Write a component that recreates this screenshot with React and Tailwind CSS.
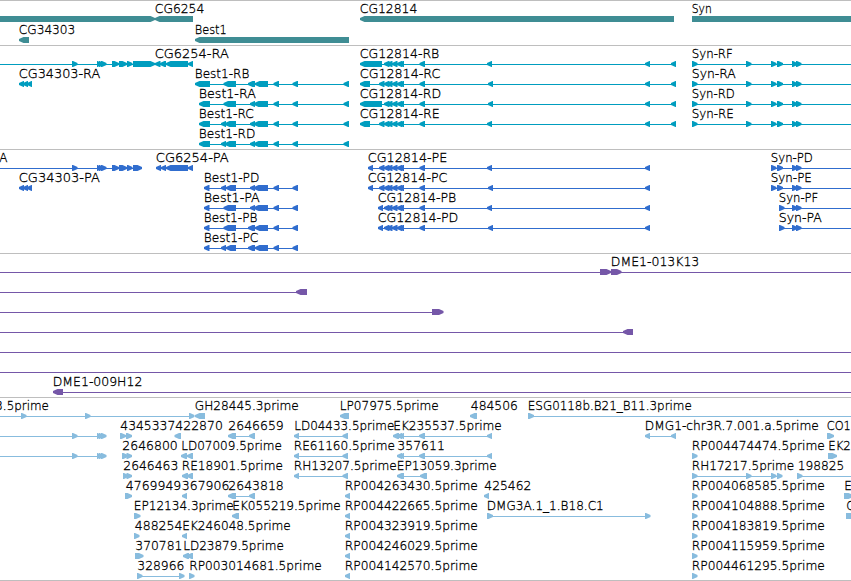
import React from "react";

// Feature: [direction, line start, line end, exons]; label: [text, ink start, ink end]
const L = "l";
const R = "r";

const bestTail = [[273.5, 279], [292.5, 298], [343.5, 349]];
const cgLong = (a, far) => [...a, [384, 389.5], [387, 392.5], [392, 397.5], [397, 402], [398.5, 404], [419.5, 425], [far, far + 5]];
const synExons = [[692, 697.5], [746, 751.5], [771, 776.5], [777, 783], [792, 797.5], [796, 801.5]];
const leftGene = [[72, 77.5], [97, 102], [99, 104], [101, 106.5], [112, 119], [119, 127], [127, 132.5]];
const tiny = [[19, 24], [23, 28], [27, 32]];

const tracks = [
  {
    id: "genes",
    box: "h-[45px] text-[#3f8d94]",
    rowBox: "h-[21px]",
    rows: [
      {
        f: [[R, 0, 0, [[-10, 155]]], [L, 0, 0, [[155, 193]]], [L, 0, 0, [[360, 674]]], [R, 0, 0, [[692, 870]]]],
        t: [["CG6254", 155, 203.5], ["CG12814", 360, 416.5], ["Syn", 692, 711]],
      },
      {
        f: [[L, 0, 0, [[19, 29]]], [L, 0, 0, [[195, 349]]]],
        t: [["CG34303", 19, 74.5], ["Best1", 195, 226]],
      },
    ],
  },
  {
    id: "transcripts",
    box: "h-[104px] text-[#009dbf]",
    rowBox: "h-5",
    rows: [
      {
        f: [
          [R, 0, 150, [...leftGene, [133, 155]]],
          [L, 155, 193, [[155, 160.5], [160, 166], [166, 188], [188, 193]]],
          [L, 360, 676, cgLong([[360, 382]], 487).concat([[645, 650], [671, 676]])],
          [R, 692, 851, synExons],
        ],
        t: [["CG6254-RA", 155, 228], ["CG12814-RB", 360, 438.5], ["Syn-RF", 692, 732]],
      },
      {
        f: [
          [L, 0, 0, tiny],
          [L, 195, 349, [[195, 210], [223.5, 236], [248, 255], [255, 268], ...bestTail]],
          [L, 360, 676, cgLong([[360, 370], [379, 384.5]], 488).concat([[645, 650], [671, 676]])],
          [R, 692, 851, synExons],
        ],
        t: [["CG34303-RA", 19, 99.5], ["Best1-RB", 195, 248.5], ["CG12814-RC", 360, 439.5], ["Syn-RA", 692, 735]],
      },
      {
        f: [
          [L, 199, 349, [[199, 210], [223.5, 236], [250, 255], [254, 268], ...bestTail]],
          [L, 360, 676, cgLong([[360, 382]], 488).concat([[645, 650], [671, 676]])],
          [R, 692, 851, synExons],
        ],
        t: [["Best1-RA", 199, 255], ["CG12814-RD", 360, 440.5], ["Syn-RD", 692, 734]],
      },
      {
        f: [
          [L, 199, 349, [[199, 210], [221, 226], [225, 236], [250, 255], [254, 268], ...bestTail]],
          [L, 360, 676, cgLong([[360, 370], [379, 384.5]], 487).concat([[645, 650], [671, 676]])],
          [R, 692, 851, synExons],
        ],
        t: [["Best1-RC", 199, 253], ["CG12814-RE", 360, 439], ["Syn-RE", 692, 733]],
      },
      {
        f: [[L, 199, 349, [[199, 210], [221, 226], [225, 236], [250, 255], [254, 268], ...bestTail]]],
        t: [["Best1-RD", 199, 254.5]],
      },
    ],
  },
  {
    id: "proteins",
    box: "h-[104px] text-[#306dce]",
    rowBox: "h-5",
    rows: [
      {
        f: [
          [R, 0, 140, [...leftGene, [133, 142]]],
          [L, 156, 193, [[156, 161], [161, 166], [166, 188], [188, 193]]],
          [L, 368, 650, cgLong([[368, 373], [379, 384.5]], 487).concat([[645, 650]])],
          [R, 771, 851, synExons.slice(2)],
        ],
        t: [["A", -0.5, 7.5], ["CG6254-PA", 156, 228], ["CG12814-PE", 368, 446.5], ["Syn-PD", 771, 812]],
      },
      {
        f: [
          [L, 0, 0, tiny],
          [L, 204, 298, [[204, 209.5], [221, 226], [226, 236], [250, 255], [254, 268], [273.5, 279], [292.5, 298]]],
          [L, 368, 650, cgLong([[368, 373], [379, 384.5]], 488).concat([[645, 650]])],
          [R, 771, 851, synExons.slice(2)],
        ],
        t: [["CG34303-PA", 19, 99], ["Best1-PD", 204, 258.5], ["CG12814-PC", 368, 446.5], ["Syn-PE", 771, 811]],
      },
      {
        f: [
          [L, 204, 298, [[204, 209.5], [223.5, 236], [250, 255], [254, 268], [273.5, 279], [292.5, 298]]],
          [L, 378, 650, cgLong([[378, 383]], 487).concat([[645, 650]])],
          [R, 779, 851, [[779, 784.5], [792, 797.5], [796, 801.5]]],
        ],
        t: [["Best1-PA", 204, 259], ["CG12814-PB", 378, 455.5], ["Syn-PF", 779, 817.5]],
      },
      {
        f: [
          [L, 204, 298, [[204, 209.5], [223.5, 236], [248, 255], [255, 268], [273.5, 279], [292.5, 298]]],
          [L, 378, 650, cgLong([[378, 383]], 488).concat([[645, 650]])],
          [R, 779, 851, [[779, 784.5], [792, 797.5], [796, 801.5]]],
        ],
        t: [["Best1-PB", 204, 256.5], ["CG12814-PD", 378, 457.5], ["Syn-PA", 779, 821]],
      },
      {
        f: [[L, 204, 298, [[204, 209.5], [221, 226], [226, 236], [248, 255], [255, 268], [273.5, 279], [292.5, 298]]]],
        t: [["Best1-PC", 204, 257.5]],
      },
    ],
  },
  {
    id: "clones",
    box: "h-[144px] text-[#7557a8]",
    rowBox: "h-5",
    rows: [
      { f: [[R, 0, 851, [[600, 611], [611, 621.5]]]], t: [["DME1-013K13", 611, 698.5]] },
      { f: [[L, 0, 307, [[296, 307]]]], t: [] },
      { f: [[R, 0, 443, [[432, 443.5]]]], t: [] },
      { f: [[L, 0, 633, [[623, 633]]]], t: [] },
      { f: [[L, 0, 851, []]], t: [] },
      { f: [[L, 0, 851, []]], t: [] },
      { f: [[L, 53, 851, [[53, 63]]]], t: [["DME1-009H12", 53, 141.5]] },
    ],
  },
  {
    id: "ests",
    box: "h-[184px] border-b text-[#88bcde]",
    rowBox: "h-5",
    rows: [
      {
        f: [
          [R, 0, 193, [[21, 26.5], [85, 90.5], [189, 194.5]]],
          [L, 0, 0, [[195, 205]]],
          [L, 0, 0, [[340, 349]]],
          [L, 0, 0, [[470, 477]]],
          [R, 528, 851, [[528, 534]]],
        ],
        t: [["3.5prime", -4.5, 48], ["GH28445.3prime", 195, 298], ["LP07975.5prime", 340, 438], ["484506", 471, 517], ["ESG0118b.B21_B11.3prime", 528, 691]],
      },
      {
        f: [
          [R, 0, 104, [[72, 77.5], [97, 102], [99, 104], [101, 106.5]]],
          [R, 0, 0, [[120, 126], [126, 132]]],
          [L, 0, 0, [[174.5, 181]]],
          [L, 228, 255, [[228, 236], [249, 255]]],
          [L, 294, 348, [[294, 299], [342.5, 348]]],
          [L, 393, 492, [[393, 399], [397, 402], [399, 404], [419, 425], [487, 492]]],
          [L, 645, 676, [[645, 650], [671, 676]]],
          [R, 0, 0, [[827, 834]]],
        ],
        t: [["4345337", 120.5, 174.5], ["422870", 175.5, 222], ["2646659", 228.5, 283], ["LD04433.5prime", 294.5, 393.5], ["EK235537.5prime", 393.5, 501], ["DMG1-chr3R.7.001.a.5prime", 645, 818], ["CO1", 827, 850]],
      },
      {
        f: [
          [R, 0, 104, [[72, 77.5], [97, 102], [99, 104], [101, 106.5]]],
          [R, 0, 0, [[122, 128], [126.5, 132]]],
          [L, 0, 0, [[181, 187], [187, 193]]],
          [L, 294, 348, [[294, 299], [342.5, 348]]],
          [L, 397, 492, [[397, 402], [399, 404], [419, 425], [487, 492]]],
          [R, 0, 0, [[692, 697.5]]],
          [R, 0, 0, [[828, 837]]],
        ],
        t: [["2646800", 122.5, 177], ["LD07009.5prime", 181.5, 281], ["RE61160.5prime", 294, 394], ["357611", 397.5, 444], ["RP004474474.5prime", 692, 824], ["EK2", 828.5, 850]],
      },
      {
        f: [
          [R, 0, 0, [[123, 128.5], [126.5, 132]]],
          [L, 0, 0, [[182, 188], [187, 193]]],
          [L, 294, 348, [[294, 299], [342.5, 348]]],
          [L, 397, 427, [[397, 404], [420, 427]]],
          [R, 692, 782, [[692, 697.5], [746, 751.5], [771, 776.5], [777, 782.5]]],
          [R, 797, 851, [[797, 802.5]]],
        ],
        t: [["2646463", 123.5, 177.5], ["RE18901.5prime", 182, 282], ["RH13207.5prime", 294, 396], ["EP13059.3prime", 397, 496], ["RH17217.5prime", 692, 793.5], ["198825", 798, 843.5]],
      },
      {
        f: [
          [R, 0, 0, [[125, 132]]],
          [L, 0, 0, [[182, 187]]],
          [L, 228, 255, [[228, 236], [249, 255]]],
          [L, 0, 0, [[345, 350]]],
          [L, 0, 0, [[484, 489]]],
          [R, 0, 0, [[692, 697.5]]],
          [R, 0, 0, [[844, 853]]],
        ],
        t: [["4769949", 126, 180.5], ["367906", 182, 228.5], ["2643818", 228.5, 283], ["RP004263430.5prime", 345, 477], ["425462", 484.5, 530.5], ["RP004068585.5prime", 692, 824], ["E", 844.5, 851]],
      },
      {
        f: [
          [R, 0, 0, [[134, 140.5]]],
          [L, 0, 0, [[232, 239]]],
          [L, 0, 0, [[345, 350]]],
          [R, 487, 650, [[487, 493], [645, 650.5]]],
          [R, 0, 0, [[692, 697.5]]],
          [R, 0, 0, [[846, 856]]],
        ],
        t: [["EP12134.3prime", 134, 233], ["EK055219.5prime", 232.5, 340], ["RP004422665.5prime", 345, 477], ["DMG3A.1_1.B18.C1", 487, 603], ["RP004104888.5prime", 692, 824], ["C", 846.5, 854]],
      },
      {
        f: [
          [R, 0, 0, [[134, 139.5]]],
          [L, 0, 0, [[182, 187]]],
          [L, 0, 0, [[345, 350]]],
          [R, 0, 0, [[692, 697.5]]],
        ],
        t: [["488254", 135, 181.5], ["EK246048.5prime", 182.5, 290], ["RP004323919.5prime", 345, 477], ["RP004183819.5prime", 692, 824]],
      },
      {
        f: [
          [R, 0, 0, [[135, 143.5]]],
          [L, 0, 0, [[183, 189], [187, 193]]],
          [L, 0, 0, [[345, 350]]],
          [R, 0, 0, [[692, 697.5]]],
        ],
        t: [["370781", 135.5, 181.5], ["LD23879.5prime", 183.5, 283], ["RP004246029.5prime", 345, 477], ["RP004115959.5prime", 692, 824]],
      },
      {
        f: [
          [R, 137, 184, [[137, 142.5], [179, 184.5]]],
          [R, 0, 0, [[189, 194.5]]],
          [L, 0, 0, [[345, 350]]],
          [R, 0, 0, [[692, 697.5]]],
        ],
        t: [["328966", 137.5, 183.5], ["RP003014681.5prime", 189.5, 321], ["RP004142570.5prime", 345, 477], ["RP004461295.5prime", 692, 824]],
      },
    ],
  },
];

function Exon({ dir, x1, x2 }) {
  const tip = Math.min(4.5, x2 - x1 - 0.5);
  const points =
    dir === L
      ? `${x2},15 ${x1 + tip},15 ${x1},17 ${x1},19 ${x1 + tip},21 ${x2},21`
      : `${x1},15 ${x2 - tip},15 ${x2},17 ${x2},19 ${x2 - tip},21 ${x1},21`;
  return <polygon points={points} />;
}

function Feature({ feature }) {
  const [dir, start, end, exons] = feature;
  return (
    <g>
      {end > start && <rect x={start} y={18} width={end - start} height={1} />}
      {exons.map(([x1, x2], i) => (
        <Exon key={i} dir={dir} x1={x1} x2={x2} />
      ))}
    </g>
  );
}

function Row({ row, className }) {
  return (
    <div className={className}>
      <svg width="851" height="20" className="block overflow-visible fill-current">
        {row.f.map((feature, i) => (
          <Feature key={i} feature={feature} />
        ))}
        {row.t.map(([text, x1, x2]) => (
          <text
            key={text}
            x={x1 - 0.2}
            y={12}
            textLength={text.length > 1 ? x2 - x1 + 1 : undefined}
            lengthAdjust="spacingAndGlyphs"
            className="fill-black stroke-black stroke-[0.3px] font-['DejaVu_Sans',sans-serif] text-[12px] font-extralight"
          >
            {text}
          </text>
        ))}
      </svg>
    </div>
  );
}

export default function App() {
  return (
    <main className="flex h-[581px] w-[851px] flex-col overflow-hidden bg-white">
      {tracks.map((track) => (
        <section key={track.id} className={`shrink-0 border-t border-[#bebebe] ${track.box}`}>
          {track.rows.map((row, i) => (
            <Row key={i} row={row} className={track.rowBox} />
          ))}
        </section>
      ))}
    </main>
  );
}
